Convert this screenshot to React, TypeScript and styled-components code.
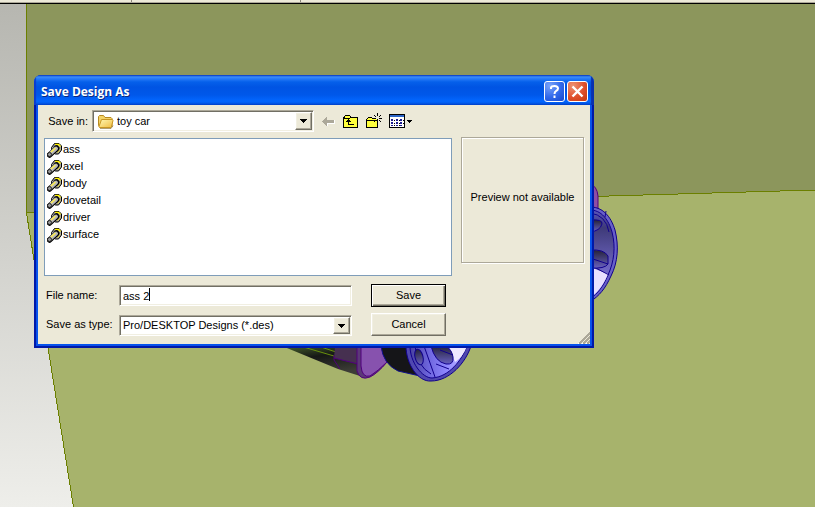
import React from 'react';
import styled, { createGlobalStyle, css } from 'styled-components';

const GlobalStyle = createGlobalStyle`
  *, *::before, *::after { box-sizing: border-box; }
  html, body { margin: 0; padding: 0; }
  body {
    font: 11px/13px "Liberation Sans", Arial, sans-serif;
    color: #000;
    overflow: hidden;
  }
`;

const face = '#ece9d8';

const sunken = css`
  border: 1px solid;
  border-color: #aca899 #fff #fff #aca899;
  box-shadow: inset 1px 1px 0 #716f64, inset -1px -1px 0 #f1efe2;
  background: #fff;
`;

const raised = css`
  border: 1px solid;
  border-color: #fff #716f64 #716f64 #fff;
  box-shadow: inset -1px -1px 0 #aca899, inset 1px 1px 0 #f1efe2;
  background: ${face};
`;

const Desktop = styled.div`
  position: relative;
  display: flex;
  flex-direction: column;
  height: 100vh;
  background: linear-gradient(#b6b6b0, #eeeeea);
`;

const ToolbarEdge = styled.div`
  display: flex;
  flex: none;
  height: 4px;
  background: ${face};
  border-bottom: 1px solid #000;
  box-shadow: inset 0 -1px 0 #aca899;
`;

const ToolbarGroup = styled.div<{ $width: number }>`
  width: ${p => p.$width}px;
  height: 2px;
  border-right: 1px solid #888578;
`;

const Scene = styled.svg`
  display: block;
  flex: 1;
  width: 100%;
  min-height: 0;
`;

const Dialog = styled.section`
  position: absolute;
  left: 34px;
  top: 75px;
  width: 560px;
  max-width: 100%;
  border-radius: 7px 7px 0 0;
  background: #0a3fd8;
  overflow: hidden;
`;

const TitleBar = styled.header`
  position: relative;
  z-index: 1;
  display: flex;
  align-items: center;
  gap: 2px;
  padding: 6px 6px 3px 7px;
  background: linear-gradient(
    #0a3cc0 0, #3a8cf8 2px, #2478f6 4px, #0560ea 7px, #0054e3 12px,
    #0058ea 20px, #0264fc 25px, #0264fa 27px, #0044cc 30px
  );
  box-shadow: inset 2px 0 1px #0a3cd0, inset -3px 0 1px #0830b0;
`;

const Title = styled.h1`
  flex: 1;
  margin: 0;
  color: #fff;
  font: bold 12px/17px "Open Sans", "Noto Sans", sans-serif;
  text-shadow: 1px 1px 0 #0a2a80;
`;

const CaptionButton = styled.button<{ $close?: boolean }>`
  display: flex;
  align-items: center;
  justify-content: center;
  width: 21px;
  height: 21px;
  padding: 0;
  border: 1px solid #fff;
  border-radius: 3px;
  background: ${p => (p.$close
    ? 'radial-gradient(circle at 25% 20%, #ee9272 0, #e0502c 55%, #c4380c 100%)'
    : 'radial-gradient(circle at 25% 20%, #7aa4fa 0, #3168ea 55%, #1848cc 100%)')};
`;

const Frame = styled.form`
  position: relative;
  display: grid;
  grid-template-columns: 1fr 123px;
  column-gap: 9px;
  margin: 0 4px 4px;
  padding: 5px 6px 8px;
  background: ${face};
  box-shadow: 0 0 0 1px #0453ee, 0 0 0 2px #0850e8, 0 0 0 4px #0018a8;
`;

const MainColumn = styled.div`
  display: flex;
  flex-direction: column;
  min-width: 0;
`;

const LookInRow = styled.div`
  display: flex;
  align-items: center;
  gap: 7px;
  padding-right: 40px;
`;

const LookInField = styled.div`
  display: flex;
  flex: 1;
  align-items: center;
`;

const LookInLabel = styled.label`
  width: 48px;
  padding-right: 4px;
  text-align: right;
`;

const Combo = styled.div<{ $tall?: boolean }>`
  ${sunken}
  position: relative;
  display: flex;
  flex: 1;
  align-items: center;
  align-self: end;
  height: ${p => (p.$tall ? 22 : 21)}px;
  padding-left: ${p => (p.$tall ? 4 : 0)}px;
`;

const ComboSelect = styled.select`
  appearance: none;
  flex: 1;
  min-width: 0;
  height: 100%;
  padding: 0 20px 0 3px;
  border: 0;
  outline: 0;
  background: transparent;
  color: inherit;
  font: inherit;
`;

const ComboArrow = styled.span`
  ${raised}
  position: absolute;
  top: 1px;
  right: 1px;
  bottom: 1px;
  display: flex;
  align-items: center;
  justify-content: center;
  width: 17px;
  pointer-events: none;
`;

const ToolButton = styled.button`
  display: flex;
  flex: none;
  padding: 0;
  border: 0;
  background: transparent;
`;

const FileList = styled.ul`
  height: 138px;
  margin: 6px 0 8px;
  padding: 2px 2px 0;
  border: 1px solid #7f9db9;
  background: #fff;
  list-style: none;
`;

const FileItem = styled.li`
  display: flex;
  align-items: center;
  height: 17px;
`;

const Fields = styled.div`
  display: grid;
  grid-template-columns: 75px 1fr 75px;
  grid-auto-rows: 23px;
  row-gap: 6px;
  align-items: center;
  padding-right: 6px;
`;

const FieldLabel = styled.label`
  padding-left: 2px;
`;

const FieldSlot = styled.div`
  position: relative;
  display: flex;
  align-self: stretch;
  align-items: center;
  margin-right: 19px;
`;

const NameInput = styled.input`
  ${sunken}
  width: 100%;
  height: 21px;
  padding: 0 3px;
  outline: 0;
  border-radius: 0;
  font: inherit;
`;

const Caret = styled.span`
  position: absolute;
  left: 30px;
  top: 4px;
  width: 1px;
  height: 13px;
  background: #000;
`;

const PushButton = styled.button<{ $primary?: boolean }>`
  ${raised}
  height: 23px;
  padding: 0;
  color: inherit;
  font: inherit;
  ${p => p.$primary && css`
    border-color: #000;
    box-shadow: inset 1px 1px 0 #fff, inset -1px -1px 0 #716f64, inset -2px -2px 0 #aca899;
  `}
`;

const Preview = styled.div`
  display: flex;
  align-items: center;
  justify-content: center;
  height: 126px;
  margin-top: 27px;
  padding-bottom: 5px;
  border: 1px solid #aca899;
  box-shadow: inset 1px 1px 0 #fff, 1px 1px 0 #fff;
`;

const Grip = styled.svg`
  position: absolute;
  right: 0;
  bottom: 0;
`;

const DownTriangle = () => (
  <svg width="7" height="4" shapeRendering="crispEdges" aria-hidden="true">
    <path d="M0 0h7v1H0zM1 1h5v1H1zM2 2h3v1H2zM3 3h1v1H3z" />
  </svg>
);

const FolderIcon = () => (
  <svg width="17" height="15" viewBox="0 0 17 15" aria-hidden="true">
    <defs>
      <linearGradient id="folder" x1="0" y1="0" x2="1" y2="1">
        <stop offset="0" stopColor="#fff8b4" />
        <stop offset="1" stopColor="#f0bc40" />
      </linearGradient>
    </defs>
    <path d="M1.5 11.5v-9l1-1h4l1.5 2h6l1 1v8l-1 1h-11z" fill="#f4d468" stroke="#b88a20" />
    <path d="M4.5 5.5h11l.5 1-1.500 6-1 1h-11l-.5-1z" fill="url(#folder)" stroke="#c89624" />
    <path d="M3 14.500h11l2-3" fill="none" stroke="#7a5c14" strokeWidth=".6" />
  </svg>
);

const PartIcon = () => (
  <svg width="16" height="16" viewBox="0 0 16 16" aria-hidden="true">
    <path d="M4.500 5.500L7.500 1.500H12L14.500 4V8L11.500 12H8.500L5 9.500Z" fill="#a4a4a4" stroke="#000" />
    <path d="M8 2.500H11.500L13.500 4.500" fill="none" stroke="#fff200" strokeWidth="1.500" />
    <path d="M10.500 10.500L13 7.500" fill="none" stroke="#ffe800" />
    <path d="M6.500 5L8.500 3.500H10.500L12 5.500L11.500 8L9.500 10" fill="none" stroke="#181818" />
    <path d="M9.500 6.500L2.500 13" fill="none" stroke="#000" strokeWidth="5.500" strokeLinecap="round" />
    <path d="M9 6.500L3 12" fill="none" stroke="#b8b8b8" strokeWidth="4" strokeLinecap="round" />
    <path d="M8.500 6L4 10" fill="none" stroke="#fff04c" strokeWidth="1.500" />
    <circle cx="2.500" cy="12.500" r="2" fill="#999" stroke="#222" />
  </svg>
);

const BackIcon = () => (
  <svg width="15" height="16" shapeRendering="crispEdges" aria-hidden="true">
    <path d="M6 4v3h8v4H7v3L2 9z" fill="#fff" />
    <path d="M1 8h1V7h1V6h1V5h1V4h1v3h7v3H6v3H5v-1H4v-1H3v-1H2V9H1z" fill="#aca899" />
  </svg>
);

const UpFolderIcon = () => (
  <svg width="16" height="16" shapeRendering="crispEdges" aria-hidden="true">
    <path d="M1 3h1V2h5v1h1v1h7v11H0V4h1z" />
    <path d="M2 3h5v2h7v9H1V5h1z" fill="#ffff3c" />
    <path d="M1 5h6v1H1z" fill="#000" />
    <path d="M5 6h1v1h1v1h1v1H6v2h5v1H5V9H3V8h1V7h1z" />
  </svg>
);

const NewFolderIcon = () => (
  <svg width="16" height="16" shapeRendering="crispEdges" aria-hidden="true">
    <path d="M1 5h1V4h4v1h1v1h5v9H0V6h1z" />
    <path d="M2 5h4v1h5v8H1V6h1z" fill="#ffff3c" />
    <path d="M1 7h10v1H1z" />
    <path d="M11 0h1v3h-1zM11 7h1v3h-1zM7 5h3v1H7zM13 5h3v1h-3zM8 2h1v1H8zM9 3h1v1H9zM14 2h1v1h-1zM13 3h1v1h-1zM9 7h1v1H9zM8 8h1v1H8zM13 7h1v1h-1zM14 8h1v1h-1z" />
  </svg>
);

const ViewsIcon = () => (
  <svg width="23" height="16" shapeRendering="crispEdges" aria-hidden="true">
    <path d="M0 1h16v14H0z" />
    <path d="M1 2h14v2H1z" fill="#2c66c8" />
    <path d="M1 4h14v10H1z" fill="#fff" />
    <path d="M2 6h2v2H2zM7 6h2v2H7zM11 6h2v2h-2zM2 9h2v2H2zM7 9h2v2H7zM11 9h2v2h-2zM2 12h2v1H2zM7 12h2v1H7zM11 12h2v1h-2z" fill="#1c1c90" />
    <path d="M5 7h1v1H5zM10 7h1v1h-1zM14 7h1v1h-1zM5 10h1v1H5zM10 10h1v1h-1zM14 10h1v1h-1zM5 12h1v1H5zM10 12h1v1h-1z" fill="#000" />
    <path d="M18 7h5v1h-5zM19 8h3v1h-3zM20 9h1v1h-1z" />
  </svg>
);

const ModelScene = () => (
  <Scene viewBox="0 4 815 503" preserveAspectRatio="xMinYMin slice" aria-hidden="true">
    <defs>
      <linearGradient id="disc" x1="0" y1="0" x2="0" y2="1">
        <stop offset="0" stopColor="#5a54bc" />
        <stop offset=".2" stopColor="#3e3a78" />
        <stop offset=".6" stopColor="#6860b8" />
        <stop offset="1" stopColor="#8a80f0" />
      </linearGradient>
      <linearGradient id="hub" x1="0" y1="0" x2="1" y2="0">
        <stop offset="0" stopColor="#4840a0" />
        <stop offset=".35" stopColor="#7068e0" />
        <stop offset=".65" stopColor="#9088ff" />
        <stop offset="1" stopColor="#c8c0ff" />
      </linearGradient>
      <linearGradient id="hole" x1="0" y1="0" x2="0" y2="1">
        <stop offset="0" stopColor="#242238" />
        <stop offset="1" stopColor="#6860c0" />
      </linearGradient>
      <linearGradient id="under" x1="0" y1="0" x2=".4" y2="1">
        <stop offset="0" stopColor="#48642c" />
        <stop offset=".45" stopColor="#161816" />
        <stop offset="1" stopColor="#3c3c36" />
      </linearGradient>
    </defs>
    <g shapeRendering="crispEdges">
      <path d="M26 4H815V190L26 213Z" fill="#8c965c" />
      <path d="M26 213L815 190V507H73Z" fill="#a7b36c" />
      <path d="M26.500 4V213L73.500 507M26 213L815 190" fill="none" stroke="#6b7f00" />
    </g>
    <g strokeWidth="1" stroke="#10008c">
      <path d="M590 184Q597 186 598 196V209H590Z" fill="#8e4ea4" stroke="#50007c" />
      <path d="M588 207C603 206 611 217 615 230C619 246 618 262 611 276C605 289 600 295 590 302Z" fill="#6860c8" />
      <path d="M588 210C602 209 609 221 612 232C616 247 614 262 608 275C603 287 598 293 590 299Z" fill="url(#disc)" />
      <path d="M590 267L608 274C603 286 598 292 590 298Z" fill="#e8e0ff" stroke="none" />
      <path d="M590 213Q606 215 609 232M594 267L609 275M606 211L605 217" fill="none" />
      <path d="M590 220Q603 219 602 224Q600 231 590 232Z" fill="url(#hole)" />
      <path d="M590 250Q604 249 608 256V264Q605 269 590 268Z" fill="url(#hole)" />
      <path d="M590 258L608 264" fill="none" />
    </g>
    <g strokeWidth="1">
      <path d="M282 346H334L360 350V376L338 369Z" fill="url(#under)" />
      <path d="M300 346L334 356M318 346L336 352" stroke="#68900c" fill="none" />
      <path d="M335 346H357V364L334 358Z" fill="#463050" />
      <path d="M334 355V360L340 369M334 358L362 365" stroke="#50007c" fill="none" />
      <path d="M357 346H387V362Q378 373 370 377Q360 381 357 371Z" fill="#5c3878" stroke="#50007c" />
      <path d="M361 346H387V362Q378 371 370 376Q362 378 361 366Z" fill="#8752ae" stroke="#50007c" />
      <path d="M381 346H410V360L420 376L398 371Q383 364 381 346Z" fill="#151518" stroke="#10108c" />
      <path d="M406 346C406 364 418 382 431 381C450 381 466 362 471 346Z" fill="#5048b0" stroke="#10008c" />
      <path d="M410 346C410 362 422 378 432 378C449 377 462 360 467 346Z" fill="url(#hub)" stroke="#10008c" />
      <path d="M449 346H467Q463 357 455 362Z" fill="#eee8ff" />
      <path d="M415 346Q417 366 431 374M424 346L435 377M436 364L449 369" fill="none" stroke="#10008c" />
      <ellipse cx="419" cy="357" rx="4" ry="8" transform="rotate(-14 419 357)" fill="url(#hole)" stroke="#10008c" />
      <path d="M431 346Q435 362 446 364Q454 365 453 357Q452 350 446 346Z" fill="url(#hole)" stroke="#10008c" />
      <path d="M440 350L453 355" stroke="#10008c" />
    </g>
  </Scene>
);

const files = ['ass', 'axel', 'body', 'dovetail', 'driver', 'surface'];

export default function App() {
  return (
    <Desktop>
      <GlobalStyle />
      <ToolbarEdge>
        <ToolbarGroup $width={132} />
        <ToolbarGroup $width={169} />
      </ToolbarEdge>
      <ModelScene />
      <Dialog role="dialog" aria-labelledby="dialog-title">
        <TitleBar>
          <Title id="dialog-title">Save Design As</Title>
          <CaptionButton type="button" aria-label="Help">
            <svg width="13" height="15" viewBox="0 0 13 15" fill="none" stroke="#fff" strokeWidth="2" aria-hidden="true">
              <path d="M3 5V3.500Q3.500 2 6.500 2Q10 2 10 4.500Q10 6 8 7Q6.500 8 6.500 10M6.500 11.500V14" />
            </svg>
          </CaptionButton>
          <CaptionButton type="button" $close aria-label="Close">
            <svg width="13" height="13" viewBox="0 0 13 13" stroke="#fff" strokeWidth="2.400" aria-hidden="true">
              <path d="M1.500 1.500L11.500 11.500M11.500 1.500L1.500 11.500" />
            </svg>
          </CaptionButton>
        </TitleBar>
        <Frame onSubmit={e => e.preventDefault()}>
          <MainColumn>
            <LookInRow>
              <LookInField>
                <LookInLabel htmlFor="save-in">Save in:</LookInLabel>
                <Combo $tall>
                  <FolderIcon />
                  <ComboSelect id="save-in" defaultValue="toy car">
                    <option>toy car</option>
                  </ComboSelect>
                  <ComboArrow><DownTriangle /></ComboArrow>
                </Combo>
              </LookInField>
              <ToolButton type="button" aria-label="Back" disabled><BackIcon /></ToolButton>
              <ToolButton type="button" aria-label="Up one level"><UpFolderIcon /></ToolButton>
              <ToolButton type="button" aria-label="Create new folder"><NewFolderIcon /></ToolButton>
              <ToolButton type="button" aria-label="View menu"><ViewsIcon /></ToolButton>
            </LookInRow>
            <FileList>
              {files.map(name => (
                <FileItem key={name}><PartIcon />{name}</FileItem>
              ))}
            </FileList>
            <Fields>
              <FieldLabel htmlFor="file-name">File name:</FieldLabel>
              <FieldSlot>
                <NameInput id="file-name" type="text" defaultValue="ass 2" />
                <Caret aria-hidden="true" />
              </FieldSlot>
              <PushButton type="submit" $primary>Save</PushButton>
              <FieldLabel htmlFor="file-type">Save as type:</FieldLabel>
              <FieldSlot>
                <Combo>
                  <ComboSelect id="file-type" defaultValue="des">
                    <option value="des">Pro/DESKTOP Designs (*.des)</option>
                  </ComboSelect>
                  <ComboArrow><DownTriangle /></ComboArrow>
                </Combo>
              </FieldSlot>
              <PushButton type="button">Cancel</PushButton>
            </Fields>
          </MainColumn>
          <Preview>Preview not available</Preview>
          <Grip width="12" height="12" shapeRendering="crispEdges" aria-hidden="true">
            <path d="M0 12L12 0M4 12L12 4M8 12L12 8" stroke="#fff" />
            <path d="M1 12L12 1M5 12L12 5M9 12L12 9" stroke="#aca899" strokeWidth="2" />
          </Grip>
        </Frame>
      </Dialog>
    </Desktop>
  );
}
